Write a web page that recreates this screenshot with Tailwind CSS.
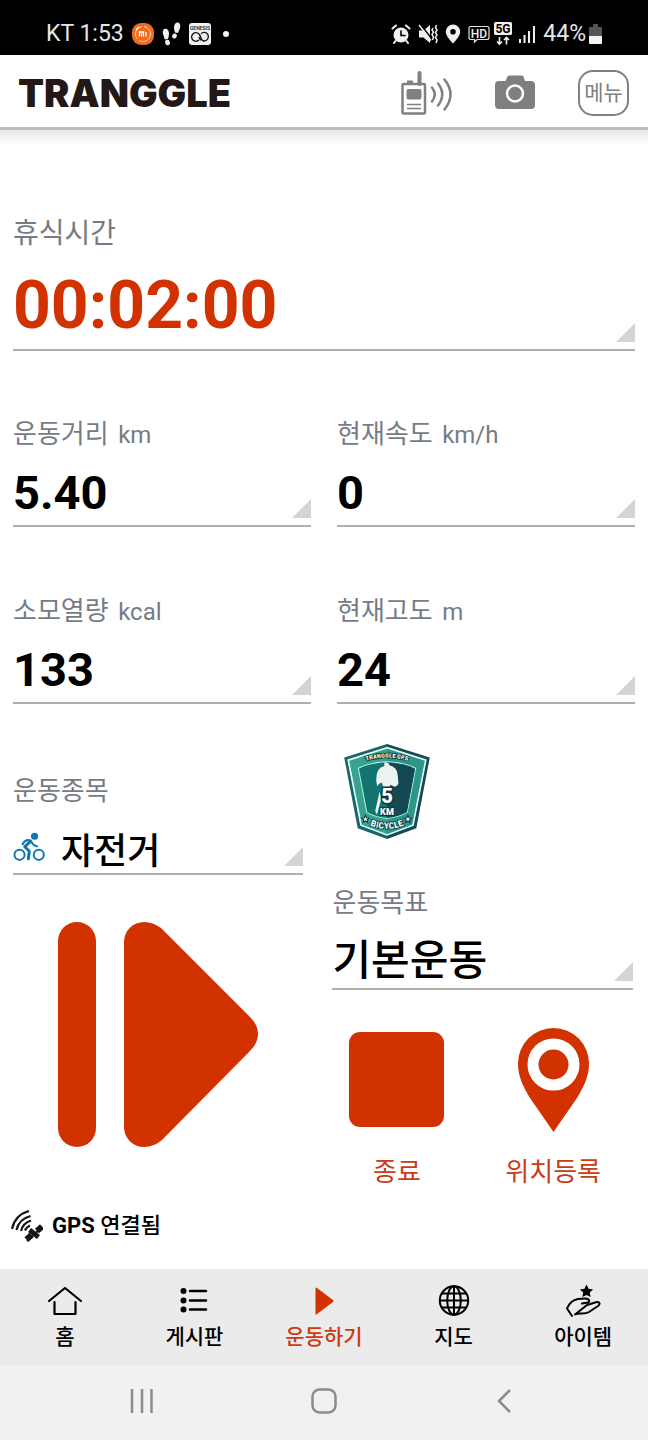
<!DOCTYPE html>
<html lang="ko">

<head>
    <meta charset="UTF-8">
    <meta name="viewport" content="width=device-width, initial-scale=1.0">
    <title>TRANGGLE</title>
    <script src="https://cdn.jsdelivr.net/npm/@tailwindcss/browser@4"></script>
</head>

<body class="bg-white font-['Roboto','Noto_Sans_CJK_KR',sans-serif] text-black">

    <div class="flex min-h-screen flex-col">

        <!-- Status bar -->
        <div class="flex h-[55px] items-center justify-between bg-black pt-3 pr-[46px] pl-[46px] text-[23px] text-gray-200">
            <div class="flex items-center gap-2">
                <span class="leading-7">KT 1:53</span>
                <svg class="size-[22px]" viewBox="0 0 22 22" fill="none">
                    <rect width="22" height="22" rx="9" fill="#f26a1b" />
                    <circle cx="11" cy="11" r="7.5" stroke="#ffd9b8" stroke-width="1" stroke-dasharray="16 2" />
                    <path d="M7.5 13.500V9h4v4.500M9.500 10.500v3M14 9v4.500" stroke="#fff" stroke-width="1.300" />
                    <path d="M4 7l3-3" stroke="#fff" stroke-width="1.500" />
                </svg>
                <svg class="h-6 w-[19px]" viewBox="0 0 19 24" fill="#f0f0f0">
                    <path d="M1 12c-1-3.500.8-5.500 2.800-5.300 2.700.3 3.700 3.800 3 7l-.8 3.300-3.200.5z" />
                    <ellipse cx="5.500" cy="20.500" rx="2.400" ry="2.800" transform="rotate(-12 5.500 20.500)" />
                    <path d="M18 6c1-3.500-.8-5.800-2.600-5.500-2.700.3-3.900 3.800-3.200 7l.7 3 3.100.6z" />
                    <ellipse cx="12.500" cy="14" rx="2.300" ry="2.600" transform="rotate(14 12.500 14)" />
                </svg>
                <svg class="size-[22px]" viewBox="0 0 22 22">
                    <rect width="22" height="22" rx="3" fill="#f0f0f0" />
                    <text x="11" y="7" text-anchor="middle" font-size="5" font-weight="500" fill="#111">GENESIS</text>
                    <g fill="none" stroke="#111" stroke-width="1.300">
                        <path d="M10 17a4.300 4.300 0 1 1 0-6q1 1 2 4 1 3 3 3a4.300 4.300 0 1 0-3-7.300" />
                        <path d="M12 17.300q-1.500-1.500-2-3.300" />
                    </g>
                </svg>
                <span class="ml-1 size-[6px] rounded-full bg-gray-100"></span>
            </div>
            <div class="flex items-center gap-[7px]">
                <svg class="size-5" viewBox="0 0 20 20" fill="none" stroke="#f0f0f0" stroke-linecap="round">
                    <circle cx="10" cy="11" r="7.500" fill="#f0f0f0" stroke="none" />
                    <path d="M1.500 4.500l3.500-3M18.500 4.500l-3.500-3M4.500 17l-1.500 2M15.500 17l1.500 2" stroke-width="2" />
                    <path d="M10 7v4.500h4" stroke="#000" stroke-width="1.600" />
                </svg>
                <svg class="size-5" viewBox="0 0 20 20">
                    <path d="M1 6.500h4.500L12 1v18l-6.500-5.500H1z" fill="#f0f0f0" />
                    <path d="M2.500.5l11 14" stroke="#000" stroke-width="1.500" />
                    <path d="M1 1l12 15.500" stroke="#f0f0f0" stroke-width="1.500" />
                    <path d="M15 4l-1 2 1.500 2-1.500 2.500 1.500 2.500-1 3M18.500 1l-1 2.500 1.500 2.500-1.500 2.500 1.500 2.500-1.500 2.500 1.500 2.500-1 3" fill="none" stroke="#f0f0f0" stroke-width="1.500" />
                </svg>
                <svg class="h-5 w-4" viewBox="0 0 16 20">
                    <path fill="#f0f0f0" fill-rule="evenodd" d="M8 .5a7.300 7.300 0 0 0-7.300 7.300C.7 12.500 8 19.500 8 19.500s7.300-7 7.300-11.700A7.300 7.300 0 0 0 8 .5zM8 5a2.800 2.800 0 1 1 0 5.600A2.800 2.800 0 0 1 8 5z" />
                </svg>
                <div class="flex items-center gap-1">
                    <svg class="h-5 w-[22px]" viewBox="0 0 22 20">
                        <path d="M3 2.500h16q2 0 2 2v9q0 2-2 2H9l-2.500 2.500v-2.500H3q-2 0-2-2v-9q0-2 2-2z" fill="none" stroke="#e0e0e0" stroke-width="1.200" />
                        <text x="11" y="13.500" text-anchor="middle" font-size="12" font-weight="500" fill="#f0f0f0">HD</text>
                    </svg>
                    <svg class="h-6 w-[18px]" viewBox="0 0 18 24">
                        <rect width="18" height="13" rx="1.500" fill="#f0f0f0" />
                        <text x="9" y="11" text-anchor="middle" font-size="12" font-weight="700" fill="#000">5G</text>
                        <path d="M5.500 15v7M3 19.500l2.500 2.500L8 19.500M12.500 22.500v-7M10 18l2.500-2.500L15 18" fill="none" stroke="#f0f0f0" stroke-width="1.600" />
                    </svg>
                </div>
                <div class="flex items-center gap-2">
                    <svg class="h-5 w-4" viewBox="0 0 16 20" stroke="#f0f0f0" stroke-width="2">
                        <path d="M1 15v4M5.500 11v8M10 7v12M15 2v17" />
                    </svg>
                    <span class="flex items-center gap-[3px] leading-7">44%
                        <svg class="h-5 w-[13px]" viewBox="0 0 13 20">
                            <path d="M4 0h5v3h3q1 0 1 1v8H0V4q0-1 1-1h3z" fill="#555" />
                            <path d="M0 12h13v7q0 1-1 1H1q-1 0-1-1z" fill="#f4f4f4" />
                        </svg>
                    </span>
                </div>
            </div>
        </div>

        <!-- Header -->
        <header class="flex h-[75px] items-center justify-between border-b-3 border-[#bdbdbd] bg-white pt-[3px] pr-[19px] pl-[18px]">
            <h1 class="font-['Inter',sans-serif] text-[38px] leading-[44px] font-black text-[#231815]">TRANGGLE</h1>
            <div class="flex items-center text-[#808080]">
                <button type="button" aria-label="무전기" class="mr-[43px]">
                    <svg class="h-11 w-[51px]" viewBox="0 0 51 44" fill="none" stroke="currentColor">
                        <path d="M18.500 13V2" stroke-width="4" stroke-linecap="round" />
                        <path d="M6 11.500h6" stroke-width="4" />
                        <rect x="1.500" y="13" width="22.500" height="29.500" rx="1" stroke-width="2.500" />
                        <rect x="5.500" y="18" width="15" height="10.500" rx="2" fill="currentColor" stroke="none" />
                        <path d="M6 33.500h14M6 37.500h14" stroke-width="1.600" />
                        <path d="M31 16.500q5.500 7 0 14M37 12.500q8.500 11 0 22M43.500 8.500q12 15 0 30" stroke-width="2.500" stroke-linecap="round" />
                    </svg>
                </button>
                <button type="button" aria-label="카메라" class="mr-[43px]">
                    <svg class="h-[35px] w-10" viewBox="0 0 40 35">
                        <path d="M4 6h6.500l2-4.500Q13 .5 15 .5h11q2 0 2.400 1L30 6h6q4 0 4 4v20q0 4-4 4H4q-4 0-4-4V10q0-4 4-4z" fill="#7f7f7f" />
                        <circle cx="20" cy="18.500" r="8" fill="none" stroke="#fff" stroke-width="2.500" />
                    </svg>
                </button>
                <button type="button" class="h-[46px] w-[51px] rounded-[15px] border-2 border-[#808080] text-[21px] leading-[42px]">메뉴</button>
            </div>
        </header>
        <div class="h-4 bg-linear-to-b from-[#e8e8e8] to-white"></div>

        <main class="flex-1 px-[13px] pt-[72px]">
            <!-- Rest time -->
            <section>
                <label for="rest-time" class="block text-[28px] leading-8 text-[#757c85]">휴식시간</label>
                <div class="relative mt-5 border-b-2 border-[#b0b0b0] pb-[7px]">
                    <select id="rest-time" class="block h-[72px] w-full appearance-none text-[66px] leading-[72px] font-bold text-[#d23200]">
                        <option>00:02:00</option>
                    </select>
                    <svg class="pointer-events-none absolute right-0 bottom-[7px] size-[19px]" viewBox="0 0 19 19"><path d="M19 0v19H0z" fill="#d4d4d4" /></svg>
                </div>
            </section>

            <!-- Measurements -->
            <div class="mt-[67px] grid grid-cols-2 gap-x-[26px] gap-y-[68px]">
                <section>
                    <label for="distance" class="block text-[26px] leading-8 text-[#757c85]">운동거리 <span class="ml-[3px] text-2xl leading-8">km</span></label>
                    <div class="relative mt-[18px] border-b-2 border-[#b0b0b0] pb-2">
                        <select id="distance" class="block h-12 w-full appearance-none text-[47px] leading-12 font-bold">
                            <option>5.40</option>
                        </select>
                        <svg class="pointer-events-none absolute right-0 bottom-[7px] size-[19px]" viewBox="0 0 19 19"><path d="M19 0v19H0z" fill="#d4d4d4" /></svg>
                    </div>
                </section>
                <section>
                    <label for="speed" class="block text-[26px] leading-8 text-[#757c85]">현재속도 <span class="ml-[3px] text-2xl leading-8">km/h</span></label>
                    <div class="relative mt-[18px] border-b-2 border-[#b0b0b0] pb-2">
                        <select id="speed" class="block h-12 w-full appearance-none text-[47px] leading-12 font-bold">
                            <option>0</option>
                        </select>
                        <svg class="pointer-events-none absolute right-0 bottom-[7px] size-[19px]" viewBox="0 0 19 19"><path d="M19 0v19H0z" fill="#d4d4d4" /></svg>
                    </div>
                </section>
                <section>
                    <label for="calories" class="block text-[26px] leading-8 text-[#757c85]">소모열량 <span class="ml-[3px] text-2xl leading-8">kcal</span></label>
                    <div class="relative mt-[18px] border-b-2 border-[#b0b0b0] pb-2">
                        <select id="calories" class="block h-12 w-full appearance-none text-[47px] leading-12 font-bold">
                            <option>133</option>
                        </select>
                        <svg class="pointer-events-none absolute right-0 bottom-[7px] size-[19px]" viewBox="0 0 19 19"><path d="M19 0v19H0z" fill="#d4d4d4" /></svg>
                    </div>
                </section>
                <section>
                    <label for="altitude" class="block text-[26px] leading-8 text-[#757c85]">현재고도 <span class="ml-[3px] text-2xl leading-8">m</span></label>
                    <div class="relative mt-[18px] border-b-2 border-[#b0b0b0] pb-2">
                        <select id="altitude" class="block h-12 w-full appearance-none text-[47px] leading-12 font-bold">
                            <option>24</option>
                        </select>
                        <svg class="pointer-events-none absolute right-0 bottom-[7px] size-[19px]" viewBox="0 0 19 19"><path d="M19 0v19H0z" fill="#d4d4d4" /></svg>
                    </div>
                </section>
            </div>

            <div class="grid grid-cols-[29fr_30fr] gap-x-[29px] pr-[2px]">
                <!-- Activity and resume -->
                <div class="pt-[71px]">
                    <label for="activity" class="block text-[26px] leading-8 text-[#757c85]">운동종목</label>
                    <div class="relative mt-6 flex items-start gap-4 border-b-2 border-[#b0b0b0]">
                        <svg class="h-8 w-8 shrink-0" viewBox="36 184 98 90" fill="none" stroke="#0f76b0">
                            <circle cx="56" cy="253" r="15.500" stroke-width="6" />
                            <circle cx="115" cy="253" r="15.500" stroke-width="6" />
                            <circle cx="102" cy="196" r="11" fill="#0f76b0" stroke="none" />
                            <path d="M90 212L72 228l14 14-3 23" stroke-width="9" stroke-linejoin="round" stroke-linecap="round" />
                            <path d="M90 209q-16-5-24 11" stroke-width="7" stroke-linecap="round" />
                            <path d="M92 212q5 13 18 15" stroke-width="6" stroke-linecap="round" />
                        </svg>
                        <select id="activity" class="block h-[42px] w-full appearance-none text-4xl leading-[42px] font-medium">
                            <option>자전거</option>
                        </select>
                        <svg class="pointer-events-none absolute right-0 bottom-[7px] size-[19px]" viewBox="0 0 19 19"><path d="M19 0v19H0z" fill="#d4d4d4" /></svg>
                    </div>
                    <button type="button" aria-label="다시 시작" class="mx-auto mt-[47px] block">
                        <svg class="h-[225px] w-[200px]" viewBox="0 0 200 225" fill="#d23200">
                            <rect width="38" height="225" rx="19" />
                            <path d="M66 20A20 20 0 0 1 86 0q9 0 17 6l89 89q8 8 8 17t-8 17l-88 89q-8 7-18 7a20 20 0 0 1-20-20z" />
                        </svg>
                    </button>
                </div>

                <!-- Goal and actions -->
                <div class="pt-10">
                    <svg class="ml-3 h-[95px] w-[86px]" viewBox="63 45 254 282" role="img" aria-label="TRANGGLE GPS 5KM BICYCLE">
                        <path d="M190 45L63 85l40 210 87 32z" fill="#17666a" />
                        <path d="M190 45l127 40-40 210-87 32z" fill="#174a55" />
                        <path d="M190 56L75 93l38 193 77 29 77-29 38-193z" fill="#35a390" stroke="#e6fffb" stroke-width="5" />
                        <path d="M190 59l112 36-37 189-75 28z" fill="#248c82" opacity=".5" />
                        <path d="M190 98q-52 2-85 19l25 131q26 15 60 18 34-3 60-18l25-131q-33-17-85-19z" fill="#11746f" stroke="#bdeee2" stroke-width="3" />
                        <path d="M190 100q50 2 83 19l-24 128q-26 14-59 17z" fill="#144954" />
                        <path d="M182 100q14-2 15 8 23 5 25 31l2 24q-5 9-12 9l-12-6-4 14-14 2-7-22q-9 0-14 11l-3-18q-1-38 24-43z" fill="#edf3ef" />
                        <path d="M168 186l-13 58 5 11 13-46z" fill="#edf3ef" />
                        <g text-anchor="middle" font-weight="900" paint-order="stroke" stroke="#10373d" stroke-linejoin="round" fill="#fff">
                            <text x="190" y="221" font-size="60" stroke-width="9">5</text>
                            <text x="190" y="255" font-size="27" stroke-width="6">KM</text>
                        </g>
                        <path id="badge-top" d="M126 96q64-22 128 0" fill="none" />
                        <path id="badge-bottom" d="M132 283q58 28 116 0" fill="none" />
                        <g text-anchor="middle" font-weight="900" fill="#eafff9" paint-order="stroke" stroke="#10373d" stroke-width="5">
                            <text font-size="17"><textPath href="#badge-top" startOffset="50%">TRANGGLE GPS</textPath></text>
                            <text font-size="26"><textPath href="#badge-bottom" startOffset="50%">BICYCLE</textPath></text>
                        </g>
                        <g fill="#fff" stroke="#10373d" stroke-width="3">
                            <path d="M126 256l3 8 8 1-6 5 2 8-7-5-7 5 2-8-6-5 8-1z" />
                            <path d="M252 256l3 8 8 1-6 5 2 8-7-5-7 5 2-8-6-5 8-1z" />
                        </g>
                    </svg>
                    <label for="goal" class="mt-12 block text-[26px] leading-8 text-[#757c85]">운동목표</label>
                    <div class="relative mt-[18px] border-b-2 border-[#b0b0b0] pb-[3px]">
                        <select id="goal" class="block h-12 w-full appearance-none text-[42px] leading-12 font-medium">
                            <option>기본운동</option>
                        </select>
                        <svg class="pointer-events-none absolute right-0 bottom-[7px] size-[19px]" viewBox="0 0 19 19"><path d="M19 0v19H0z" fill="#d4d4d4" /></svg>
                    </div>
                    <div class="mt-[38px] flex justify-between pr-8 pl-[17px] text-[26px] leading-8 text-[#c83c14]">
                        <button type="button" class="flex flex-col items-center justify-between">
                            <svg class="mt-1 h-[95px] w-[95px]" viewBox="0 0 95 95"><rect width="95" height="95" rx="11" fill="#d23200" /></svg>
                            <span>종료</span>
                        </button>
                        <button type="button" class="flex flex-col items-center gap-6">
                            <svg class="h-[104px] w-[71px]" viewBox="0 0 71 104">
                                <path d="M35.500 0A35.500 35.500 0 0 0 0 36c0 13 6 24 12 34l23.500 34L59 70c6-10 12-21 12-34A35.500 35.500 0 0 0 35.500 0z" fill="#d23200" />
                                <circle cx="35.500" cy="36.500" r="20.500" fill="none" stroke="#fff" stroke-width="11" />
                            </svg>
                            <span>위치등록</span>
                        </button>
                    </div>
                </div>
            </div>

            <div class="mt-[22px] mb-[27px] flex items-center gap-[9px] text-[22px] leading-8 font-bold">
                <svg class="-ml-[2px] size-8" viewBox="0 0 32 32" fill="none" stroke="#161616">
                    <path d="M1 19Q4 5 18 1M5.500 20Q8 9 19.500 6M10 21q2-8 10-10.500" stroke-width="2.200" />
                    <path d="M14 20.500q1.500-3.500 5-5" stroke-width="2.200" />
                    <path d="M15.500 29.500l5-4.500M26 21l5-4.500" stroke-width="6" />
                    <path d="M18.500 20l9 7" stroke-width="5" />
                    <path d="M16 31l14-13" stroke-width="2" />
                </svg>
                <p>GPS <span class="font-medium">연결됨</span></p>
            </div>
        </main>

        <!-- Tab bar -->
        <nav class="grid h-24 grid-cols-5 bg-[#ebebeb] text-[21px] leading-7 font-medium">
            <a href="#" class="flex flex-col items-center pt-[14px]">
                <svg class="h-9 w-9" viewBox="0 0 36 36" fill="none" stroke="#000" stroke-width="2.200" stroke-linecap="round" stroke-linejoin="round">
                    <path d="M2 18L18 5l16 13M7.500 19v12h21V19" />
                </svg>
                <span class="mt-1">홈</span>
            </a>
            <a href="#" class="flex flex-col items-center pt-[14px]">
                <svg class="h-9 w-9" viewBox="0 0 36 36" stroke="#000" stroke-width="2.500" stroke-linecap="round">
                    <path d="M14 8h16M14 17.500h16M14 26.500h16" />
                    <g stroke="none"><circle cx="7.500" cy="8" r="3" /><circle cx="7.500" cy="17.500" r="3" /><circle cx="7.500" cy="26.500" r="3" /></g>
                </svg>
                <span class="mt-1">게시판</span>
            </a>
            <a href="#" aria-current="page" class="flex flex-col items-center pt-[14px] text-[#cf3a10]">
                <svg class="h-9 w-9" viewBox="0 0 36 36"><path d="M9.500 5Q10 4 11 5l16 12q1 1 0 2L11 31q-1 1-1.500 0z" fill="#d23200" /></svg>
                <span class="mt-1">운동하기</span>
            </a>
            <a href="#" class="flex flex-col items-center pt-[14px]">
                <svg class="h-9 w-9" viewBox="0 0 36 36" fill="none" stroke="#000" stroke-width="2">
                    <circle cx="18" cy="17.500" r="14.200" />
                    <ellipse cx="18" cy="17.500" rx="6.800" ry="14.200" />
                    <path d="M18 3v29M4 17.500h28M6 10.500h24M6 24.500h24" />
                </svg>
                <span class="mt-1">지도</span>
            </a>
            <a href="#" class="flex flex-col items-center pt-[14px]">
                <svg class="h-9 w-9" viewBox="0 0 36 36" fill="none" stroke="#000" stroke-width="2" stroke-linejoin="round" stroke-linecap="round">
                    <path d="M21.500 1.500l2 4.300 4.700.7-3.500 3 1 4.500-4.200-2-4.200 2 1-4.500-3.500-3 4.700-.7z" fill="#000" stroke="none" />
                    <path d="M7 33l-5-7.500c2-5 5-8.500 11-9.500 4-.5 7-.8 9-.3 3.500 1 2.500 3.800 0 4.100l-5 .7M22 22l9-2.800c4-1 4.500 2 2 3.800l-9 6c-5 3-10 0-14 2.500z" />
                </svg>
                <span class="mt-1">아이템</span>
            </a>
        </nav>

        <!-- System navigation -->
        <div class="flex h-[75px] items-center justify-around bg-[#f1f1f1] px-[51px] pb-1 text-[#8c8c8c]">
            <button type="button" aria-label="최근 앱">
                <svg class="h-6 w-6" viewBox="0 0 24 24" stroke="currentColor" stroke-width="2.500"><path d="M2 0v24M12 0v24M21.500 0v24" /></svg>
            </button>
            <button type="button" aria-label="홈">
                <svg class="h-[26px] w-[26px]" viewBox="0 0 26 26" fill="none" stroke="currentColor" stroke-width="2.500"><rect x="1.500" y="1.500" width="23" height="23" rx="7" /></svg>
            </button>
            <button type="button" aria-label="뒤로">
                <svg class="h-6 w-6" viewBox="0 0 24 24" fill="none" stroke="currentColor" stroke-width="2.500"><path d="M16 1L5 12l11 11" /></svg>
            </button>
        </div>
    </div>
</body>

</html>
